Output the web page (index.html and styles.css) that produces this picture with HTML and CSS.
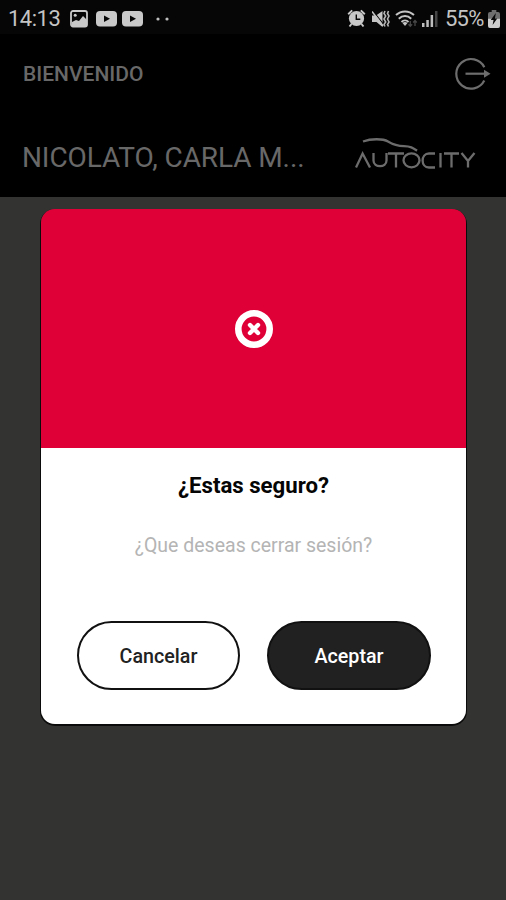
FILE: index.html
```html
<!DOCTYPE html>
<html lang="es">
<head>
<meta charset="utf-8">
<title>Autocity</title>
<link rel="stylesheet" href="styles.css">
</head>
<body>
<div class="status">
  <div class="status-left">
    <span class="clock">14:13</span>
    <svg class="photo" width="18" height="18" viewBox="0 0 18 18"><rect x="1" y="1" width="16" height="15.5" rx="2" fill="none" stroke="#c9c9c9" stroke-width="1.8"/><circle cx="5.2" cy="5.3" r="1.5" fill="#c9c9c9"/><path d="M2 15v-3l4-2 3 1 4-5 4 4v6H2z" fill="#c9c9c9"/></svg>
    <svg class="video" width="21" height="16" viewBox="0 0 21 16"><rect width="21" height="15.5" rx="4" fill="#c9c9c9"/><path d="M8 4.5l6 3.3-6 3.3z" fill="#050505"/></svg>
    <svg class="video" width="21" height="16" viewBox="0 0 21 16"><rect width="21" height="15.5" rx="4" fill="#c9c9c9"/><path d="M8 4.5l6 3.3-6 3.3z" fill="#050505"/></svg>
    <svg class="more" width="14" height="4" viewBox="0 0 14 4"><circle cx="2" cy="2" r="1.6" fill="#c0c0c0"/><circle cx="11" cy="2" r="1.6" fill="#c0c0c0"/></svg>
  </div>
  <div class="status-right">
    <svg width="19" height="19" viewBox="0 0 19 19"><circle cx="9.5" cy="9.5" r="7.6" fill="#c8c8c8"/><path d="M1.200 5.200l4-3.800M17.800 5.200l-4-3.800M4.500 15l-2 2.500M14.500 15l2 2.500" stroke="#c8c8c8" stroke-width="2"/><path d="M9.300 5.500v4.700h4" fill="none" stroke="#060606" stroke-width="1.400"/></svg>
    <svg class="mute" width="18" height="18" viewBox="0 0 18 18"><path d="M0 5.500h4l6.500-4.500v16L4.500 12H0z" fill="#c4c4c4"/><path d="M1.500 1.500l11 14" stroke="#060606" stroke-width="1.200"/><path d="M0 1.500l11 14.500" stroke="#c4c4c4" stroke-width="1.500"/><path d="M13 1l-1 2.500 1.700 2.500-1.700 3 1.700 3-1.700 2.500 1 2M16.500 1L15.500 3.500 17 6l-1.500 3 1.500 3-1.500 2.500 1 2" fill="none" stroke="#b4b4b4" stroke-width="1.600"/></svg>
    <svg class="wifi" width="23" height="18" viewBox="0 0 23 18"><path d="M1 5c5.200-4.800 12.800-4.800 18 0M3.800 8.700c3.700-3.700 8.700-3.700 12.400 0M6.500 12c2-2 5-2 7 0" fill="none" stroke="#c4c4c4" stroke-width="2"/><path d="M7.500 13L10 16l2.500-3c-1.500-1.300-3.500-1.300-5 0z" fill="#c4c4c4"/><path d="M15.300 11v5M13.500 14.300l1.800 2 1.800-2M20 16v-5M18.200 12.500l1.800-2 1.800 2" fill="none" stroke="#484848" stroke-width="1.300"/></svg>
    <svg class="signal" width="17" height="17" viewBox="0 0 17 17"><path d="M0 13h2.500v4H0zM4.300 10h2.500v7H4.300zM8.600 5h2.500v12H8.600z" fill="#bdbdbd"/><path d="M13 1h2.500v16H13z" fill="#454545"/></svg>
    <span class="percent">55%</span>
    <svg class="battery" width="12" height="18" viewBox="0 0 13 18" preserveAspectRatio="none"><path d="M4 0h5v2h2q2 0 2 2v4.500H0V4q0-2 2-2h2z" fill="#6f6f6f"/><path d="M0 8.500h13V16q0 2-2 2H2q-2 0-2-2z" fill="#cdcdcd"/><path d="M8.500 3L3 10h3l-1 5 5-6.500H7.500z" fill="#080808"/></svg>
  </div>
</div>
<header>
  <div class="welcome">
    <span>BIENVENIDO</span>
    <svg width="36" height="34" viewBox="0 0 36 34"><path d="M29.300 10.200A14.800 14.800 0 1 0 29.300 23.500" fill="none" stroke="#6d6d6d" stroke-width="2.200"/><path d="M10.500 16.700h20" stroke="#6d6d6d" stroke-width="2.200"/><path d="M29 12.700l6.500 4-6.500 4z" fill="#6d6d6d"/></svg>
  </div>
  <div class="account">
    <span>NICOLATO, CARLA M...</span>
    <svg width="122" height="34" viewBox="0 0 122 34"><g fill="none" stroke="#6c6c6c" stroke-width="2.300"><path d="M8 4.500C16 1.500 28 1.500 33 4.500S42 9 49 9.200 58 11 62 13.700"/><path d="M1 30.500L7.600 16.500 15 30.500M18.500 16v7.500c0 7.500 13 7.500 13 0V16M33 16.500h16M41 16.500v14"/><ellipse cx="56.500" cy="23.300" rx="8" ry="7"/><path d="M80 16.500h-6c-8.500 0-8.500 14 0 14h6M85.500 16v14.500M89 16.500h15M96.500 16.500v14M106.500 16l6.500 8 6.500-8M113 24v6.500"/></g></svg>
  </div>
</header>
<main>
  <section class="dialog">
    <div class="banner">
      <svg width="40" height="40" viewBox="0 0 40 40"><circle cx="20" cy="20" r="15.700" fill="none" stroke="#fff" stroke-width="6.600"/><path d="M16 16l8 8M24 16l-8 8" stroke="#fff" stroke-width="4.400" stroke-linecap="round"/></svg>
    </div>
    <div class="content">
      <h1>¿Estas seguro?</h1>
      <p>¿Que deseas cerrar sesión?</p>
      <div class="actions">
        <button class="cancel">Cancelar</button>
        <button class="accept">Aceptar</button>
      </div>
    </div>
  </section>
</main>
</body>
</html>
```
FILE: styles.css
```css
* { box-sizing: border-box; }
body { margin: 0; height: 900px; overflow: hidden; background: #333331; font-family: Roboto, sans-serif; }
svg { display: block; flex: none; }
.status { height: 34px; background: #060606; display: flex; justify-content: space-between; padding: 2px 6px 0 8px; color: #c4c4c4; font-size: 22px; line-height: 34px; }
.status-left, .status-right { display: flex; align-items: center; height: 34px; }
.clock { width: 62px; letter-spacing: -.5px; }
.photo, .status-left .video { margin-bottom: 1px; }
.status-left .video { margin-left: 8px; }
.status-left .video + .video { margin-left: 5px; }
.more { margin-left: 13px; }
.status-right svg { margin-bottom: 1px; }
.mute { margin-left: 6px; }
.wifi { margin-left: 5px; }
.signal { margin-left: 4px; }
.percent { width: 42px; margin-left: 6px; letter-spacing: -.8px; }
.battery { margin-left: 1px; }
header { height: 163px; background: #000; color: #686868; }
.welcome { height: 80px; padding: 0 15px 0 23px; display: flex; align-items: center; justify-content: space-between; font-size: 21px; font-weight: 500; }
.account { height: 83px; padding: 3px 29px 0 22px; display: flex; align-items: center; justify-content: space-between; font-size: 28px; letter-spacing: -.1px; }
.account svg { margin-bottom: 6px; }
.account span { white-space: nowrap; }
main { padding: 12px 40px 0 41px; }
.dialog { height: 515px; border-radius: 14px; overflow: hidden; background: linear-gradient(#e00038 239px, #fff 239px); box-shadow: 0 1px 0 1px #0b0b0b; }
.banner { height: 239px; display: flex; align-items: center; justify-content: center; }
.content { padding: 23px 36px 0 36px; text-align: center; }
h1 { margin: 0; font-size: 22.2px; line-height: 28px; font-weight: 700; color: #050505; }
p { margin: 34px 0 0; font-size: 19.5px; line-height: 26px; color: #b4b4b4; }
.actions { margin: 62px -1px 0 0; display: flex; justify-content: space-between; }
button { width: 163px; height: 69px; padding: 1px 0 0; border: 2px solid #111; border-radius: 35px; font: 500 19.7px Roboto, sans-serif; }
.cancel { background: #fff; color: #222; }
.accept { background: #212121; color: #fff; width: 164px; }
```
